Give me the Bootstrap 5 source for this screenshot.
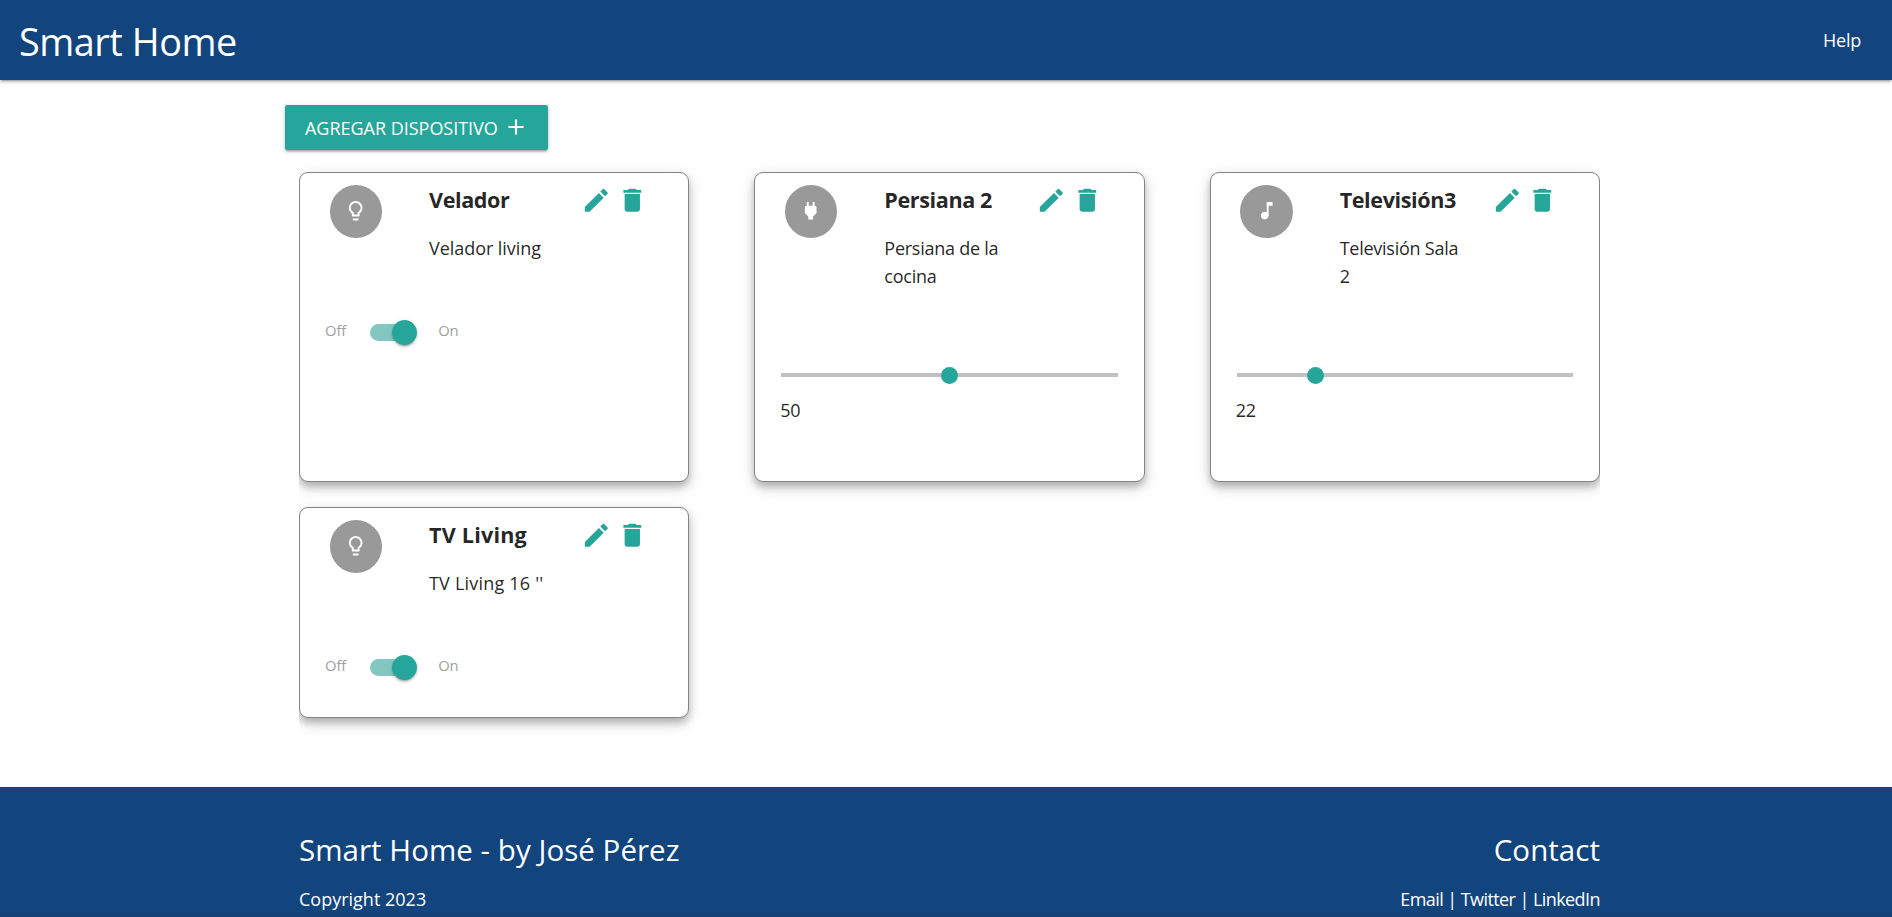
<!DOCTYPE html>
<html lang="es">
<head>
<meta charset="utf-8">
<meta name="viewport" content="width=device-width, initial-scale=1">
<title>Smart Home</title>
<link href="https://cdn.jsdelivr.net/npm/bootstrap@5.3.0/dist/css/bootstrap.min.css" rel="stylesheet">
<style>
body { font-family: "Open Sans", sans-serif; font-size: 18px; line-height: 28px; color: rgba(0,0,0,.87); overflow: hidden; height: 917px; letter-spacing: -.25px; }
.t { display: inline-block; white-space: nowrap; }
.topbar { height: 80px; background: #12447e; padding: 0 31px 0 19px; box-shadow: 0 2px 2px 0 rgba(0,0,0,.14), 0 3px 1px -2px rgba(0,0,0,.12), 0 1px 5px 0 rgba(0,0,0,.2); }
.brand { font-size: 37.8px; letter-spacing: -.45px; line-height: 80px; padding-top: 4px; }
.btn-add { margin: 25px 0 0 285px; width: 263px; height: 45px; padding: 0 19px 0 20px; background: #26a69a; color: #fff; border-radius: 2px; font-size: 18px; letter-spacing: -.02px; box-shadow: 0 2px 2px 0 rgba(0,0,0,.14), 0 3px 1px -2px rgba(0,0,0,.12), 0 1px 5px 0 rgba(0,0,0,.2); }
.btn-add .t { padding-top: 2px; }
.btn-add svg { margin-bottom: 1px; flex: none; }
.wrap { width: 1301px; margin: 0 auto 0 299px; }
.devices { display: grid; grid-template-columns: repeat(3, 1fr); column-gap: 65px; row-gap: 25px; padding: 22px 0 30px; overflow: hidden; grid-template-rows: 310px 211px; }
.device { border: 1px solid #848486; border-radius: 9px; background: #fff; padding: 12px 25px 0; box-shadow: 0 5px 7px rgba(0,0,0,.2), 0 5px 15px rgba(0,0,0,.17); }
.top-part { height: 99px; }
.disc { width: 52.5px; height: 53px; background: #999; margin-left: 4.500px; color: #fff; flex: none; }
.disc svg { width: 23.4px; height: 23.4px; margin-top: -2px; }
.info { width: 130px; margin-left: 47px; }
.info h2 { font-size: 21.6px; font-weight: 700; line-height: 30px; margin: 0 0 19px; letter-spacing: -.4px; }
.info .living { letter-spacing: -.05px; }
.info .wide { letter-spacing: .2px; }
.tools { color: #26a69a; gap: 5px; margin-left: 22px; }
.tools svg { width: 30.6px; height: 30.6px; }
svg { fill: currentColor; display: block; }
.switch { color: #9e9e9e; font-size: 14.8px; margin-top: 32px; height: 29px; }
.switch .t { margin-top: -1px; letter-spacing: -.1px; }
.track { width: 47px; height: 17px; position: relative; margin: 3px 21px 0 24px; }
.track::before { content: ""; display: block; width: 40px; height: 17px; border-radius: 9px; background: #84c7c1; }
.knob { position: absolute; left: 22px; top: -4px; width: 25px; height: 25px; border-radius: 50%; background: #26a69a; box-shadow: 0 3px 1px -2px rgba(0,0,0,.2), 0 2px 2px 0 rgba(0,0,0,.14), 0 1px 5px 0 rgba(0,0,0,.12); }
.slider { height: 4px; background: #c2c0c2; margin: 89px 1px 0; position: relative; }
.slider i { position: absolute; top: -6px; width: 17px; height: 17px; border-radius: 50%; background: #26a69a; }
.value { margin-top: 19px; }
.foot { background: #12447e; color: #fff; height: 130px; margin-top: 39px; }
.foot .wrap { padding-top: 46px; height: 125px; }
.foot h5 { font-size: 29.5px; font-weight: 400; line-height: 34px; margin: 0 0 18px; letter-spacing: .04px; }
.copy { letter-spacing: 0; }
.links { letter-spacing: -.57px; }
.foot-end { height: 5px; background: rgba(51,51,51,.08); }
</style>
</head>
<body>
<svg width="0" height="0" class="position-absolute" aria-hidden="true"><defs>
<symbol id="bulb" viewBox="0 0 24 24"><path d="M9 21c0 .55.45 1 1 1h4c.55 0 1-.45 1-1v-1H9v1zm3-19C8.140 2 5 5.140 5 9c0 2.380 1.190 4.470 3 5.740V17c0 .55.45 1 1 1h6c.55 0 1-.45 1-1v-2.260c1.810-1.270 3-3.360 3-5.740 0-3.860-3.140-7-7-7zm2.850 11.100l-.85.6V16h-4v-2.300l-.85-.6C7.800 12.160 7 10.630 7 9c0-2.760 2.240-5 5-5s5 2.240 5 5c0 1.630-.8 3.160-2.150 4.100z"/></symbol>
<symbol id="plug" viewBox="0 0 24 24"><path d="M16.010 7L16 3h-2v4h-4V3H8v4h-.010C7 6.990 6 7.990 6 8.990v5.490L9.500 18v3h5v-3l3.500-3.510v-5.500c0-1-1-2-1.990-1.990z"/></symbol>
<symbol id="note" viewBox="0 0 24 24"><path d="M12 3v10.550c-.59-.34-1.270-.55-2-.55-2.210 0-4 1.790-4 4s1.790 4 4 4 4-1.790 4-4V7h4V3h-6z"/></symbol>
<symbol id="edit" viewBox="0 0 24 24"><path d="M3 17.250V21h3.750L17.810 9.940l-3.750-3.750L3 17.250zM20.710 7.040c.39-.39.39-1.020 0-1.410l-2.340-2.340c-.39-.39-1.020-.39-1.410 0l-1.830 1.830 3.750 3.750 1.830-1.830z"/></symbol>
<symbol id="trash" viewBox="0 0 24 24"><path d="M6 19c0 1.100.9 2 2 2h8c1.100 0 2-.9 2-2V7H6v12zM19 4h-3.500l-1-1h-5l-1 1H5v2h14V4z"/></symbol>
<symbol id="plus" viewBox="0 0 24 24"><path d="M19 13h-6v6h-2v-6H5v-2h6V5h2v6h6v2z"/></symbol>
</defs></svg>

<nav class="topbar d-flex justify-content-between align-items-center text-white">
  <span class="t brand">Smart Home</span><span class="t help">Help</span>
</nav>
<main>
  <button class="btn btn-add border-0 d-flex align-items-center justify-content-between"><span class="t">AGREGAR DISPOSITIVO</span><svg width="26" height="26"><use href="#plus"/></svg></button>
  <div class="wrap devices">
    <article class="device">
      <div class="top-part d-flex"><div class="disc rounded-circle d-flex align-items-center justify-content-center"><svg><use href="#bulb"/></svg></div>
        <div class="info"><h2>Velador</h2><span class="living">Velador living</span></div>
        <div class="tools d-flex"><svg><use href="#edit"/></svg><svg><use href="#trash"/></svg></div></div>
      <div class="switch d-flex align-items-center"><span class="t">Off</span><div class="track"><div class="knob"></div></div><span class="t">On</span></div>
    </article>
    <article class="device">
      <div class="top-part d-flex"><div class="disc rounded-circle d-flex align-items-center justify-content-center"><svg><use href="#plug"/></svg></div>
        <div class="info"><h2>Persiana 2</h2>Persiana de la<br>cocina</div>
        <div class="tools d-flex"><svg><use href="#edit"/></svg><svg><use href="#trash"/></svg></div></div>
      <div class="slider"><i style="left:47.500%"></i></div><div class="value">50</div>
    </article>
    <article class="device">
      <div class="top-part d-flex"><div class="disc rounded-circle d-flex align-items-center justify-content-center"><svg><use href="#note"/></svg></div>
        <div class="info"><h2>Televisión3</h2>Televisión Sala<br>2</div>
        <div class="tools d-flex"><svg><use href="#edit"/></svg><svg><use href="#trash"/></svg></div></div>
      <div class="slider"><i style="left:20.900%"></i></div><div class="value">22</div>
    </article>
    <article class="device">
      <div class="top-part d-flex"><div class="disc rounded-circle d-flex align-items-center justify-content-center"><svg><use href="#bulb"/></svg></div>
        <div class="info"><h2 class="wide">TV Living</h2><span class="wide">TV Living 16 ''</span></div>
        <div class="tools d-flex"><svg><use href="#edit"/></svg><svg><use href="#trash"/></svg></div></div>
      <div class="switch d-flex align-items-center"><span class="t">Off</span><div class="track"><div class="knob"></div></div><span class="t">On</span></div>
    </article>
  </div>
</main>
<footer class="foot">
  <div class="wrap d-flex justify-content-between">
    <div><h5>Smart Home - by José Pérez</h5><div class="copy">Copyright 2023</div></div>
    <div class="text-end"><h5>Contact</h5><div class="links">Email | Twitter | LinkedIn</div></div>
  </div>
  <div class="foot-end"></div>
</footer>
<script src="https://cdn.jsdelivr.net/npm/bootstrap@5.3.0/dist/js/bootstrap.bundle.min.js"></script>
</body>
</html>
